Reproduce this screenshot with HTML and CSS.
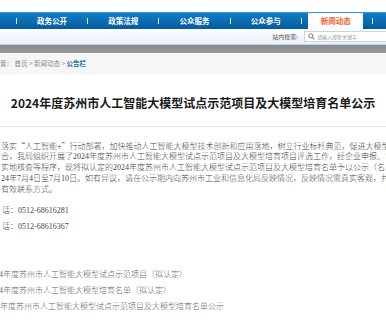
FILE: index.html
```html
<!DOCTYPE html>
<html lang="zh-CN">
<head>
<meta charset="utf-8">
<title>公告栏</title>
<link rel="stylesheet" href="styles.css">
</head>
<body>
<div class="page">
  <div class="topgap"></div>
  <nav class="nav">
    <span class="sep"></span>
    <a class="item">政务公开</a>
    <span class="sep"></span>
    <a class="item">政策法规</a>
    <span class="sep"></span>
    <a class="item">公众服务</a>
    <span class="sep"></span>
    <a class="item">公众参与</a>
    <span class="sep"></span>
    <a class="item item-active"><span class="tab">新闻动态</span></a>
    <span class="sep"></span>
  </nav>
  <div class="searchbar">
    <span class="search-label">站内搜索:</span>
    <div class="searchbox">
      <svg class="search-icon" width="7" height="7" viewBox="0 0 10 10"><circle cx="4" cy="4" r="3" fill="none" stroke="#777" stroke-width="1.4"/><line x1="6.2" y1="6.2" x2="9.2" y2="9.2" stroke="#777" stroke-width="1.6"/></svg>
      <span class="placeholder">请输入搜索关键字</span>
    </div>
  </div>
  <div class="graybar"></div>
  <div class="crumb">置：&nbsp;首页 &gt; 新闻动态 &gt; <span class="crumb-current">公告栏</span></div>
  <h1 class="title">2024年度苏州市人工智能大模型试点示范项目及大模型培育名单公示</h1>
  <div class="content">
    <div class="para">
      <div class="line">落实<span class="cjk">“</span>人工智能+<span class="cjk">”</span>行动部署，加快推动人工智能大模型技术创新和应用落地，树立行业标杆典范，促进大模型与</div>
      <div class="line">合，我局组织开展了2024年度苏州市人工智能大模型试点示范项目及大模型培育项目评选工作，经企业申报、评审</div>
      <div class="line">实地核查等程序，现将拟认定的2024年度苏州市人工智能大模型试点示范项目及大模型培育名单予以公示（名单</div>
      <div class="line">24年7月4日至7月10日。如有异议，请在公示期内向苏州市工业和信息化局反映情况，反映情况需真实客观，并</div>
      <div class="line">有效联系方式。</div>
    </div>
    <div class="para phone">
      <div class="line">话：0512-68616281</div>
    </div>
    <div class="para phone">
      <div class="line">话：0512-68616367</div>
    </div>
    <div class="attachments">
      <div class="line att att-cut">2024年度苏州市人工智能大模型试点示范项目（拟认定）</div>
      <div class="line att att-cut">2024年度苏州市人工智能大模型培育名单（拟认定）</div>
      <div class="line att">年度苏州市人工智能大模型试点示范项目及大模型培育名单公示</div>
    </div>
  </div>
</div>
</body>
</html>
```

FILE: styles.css
```css
html, body {
  margin: 0;
  padding: 0;
  background: #ffffff;
}
.page {
  width: 386px;
  height: 328px;
  overflow: hidden;
  font-family: "Noto Sans CJK SC", sans-serif;
}
.topgap {
  height: 12px;
}
.nav {
  display: flex;
  align-items: center;
  height: 17px;
  padding-left: 16px;
  background: linear-gradient(to bottom, #3d9ee0 0px, #1079c2 2px, #0a6bb1 10px, #075a98 17px);
}
.sep {
  width: 1px;
  height: 6px;
  background: #d8e9f7;
  flex: none;
}
.item {
  width: 70.2px;
  flex: none;
  text-align: center;
  color: #ffffff;
  font-size: 7.5px;
  font-weight: bold;
  line-height: 17px;
  height: 17px;
}
.item-active {
  display: flex;
  justify-content: center;
  align-items: flex-end;
}
.tab {
  display: block;
  width: 55px;
  height: 16px;
  margin-left: -2px;
  background: linear-gradient(to bottom, #ffffff, #f7fbfe);
  border-radius: 1px 1px 0 0;
  color: #f0642a;
  line-height: 16px;
}
.searchbar {
  display: flex;
  align-items: center;
  justify-content: flex-end;
  height: 15px;
  background: linear-gradient(to bottom, #ffffff, #e6f1fa);
  border-bottom: 1px solid #bcd8ee;
}
.search-label {
  font-size: 6px;
  color: #555555;
  margin-right: 6px;
}
.searchbox {
  display: flex;
  align-items: center;
  width: 80px;
  height: 9px;
  margin-right: -3px;
  background: #ffffff;
  border: 1px solid #c9d6e2;
  padding-left: 3px;
}
.search-icon {
  display: block;
  flex: none;
}
.placeholder {
  font-size: 5px;
  color: #9a9a9a;
  margin-left: 2px;
  white-space: nowrap;
}
.graybar {
  height: 8px;
  background: linear-gradient(to bottom, #8a8a8a, #979797);
}
.crumb {
  height: 21px;
  line-height: 21px;
  background: #f6f6f6;
  font-size: 6.5px;
  color: #8c8c8c;
  white-space: nowrap;
}
.crumb-current {
  color: #1f6eb8;
  font-weight: bold;
}
.title {
  margin: 0;
  height: 52px;
  line-height: 58px;
  text-align: center;
  font-size: 12px;
  font-weight: bold;
  color: #1a1a1a;
  border-bottom: 1px solid #e8e8e8;
  white-space: nowrap;
}
.content {
  padding-top: 13px;
  color: #474747;
  font-family: "Liberation Serif", "Noto Sans CJK SC", serif;
  font-size: 8px;
  font-weight: 300;
}
.cjk {
  font-family: "Noto Sans CJK SC", sans-serif;
}
.para {
  margin-bottom: 5px;
}
.para:first-child {
  margin-bottom: 10px;
}
.line {
  height: 11px;
  line-height: 11px;
  white-space: nowrap;
  padding-left: 1px;
}
.phone .line {
  padding-left: 2px;
}
.attachments {
  margin-top: 35px;
}
.att {
  height: 16px;
  line-height: 16px;
  color: #666666;
  padding-left: 0;
}
.att-cut {
  text-indent: -13px;
}
```
